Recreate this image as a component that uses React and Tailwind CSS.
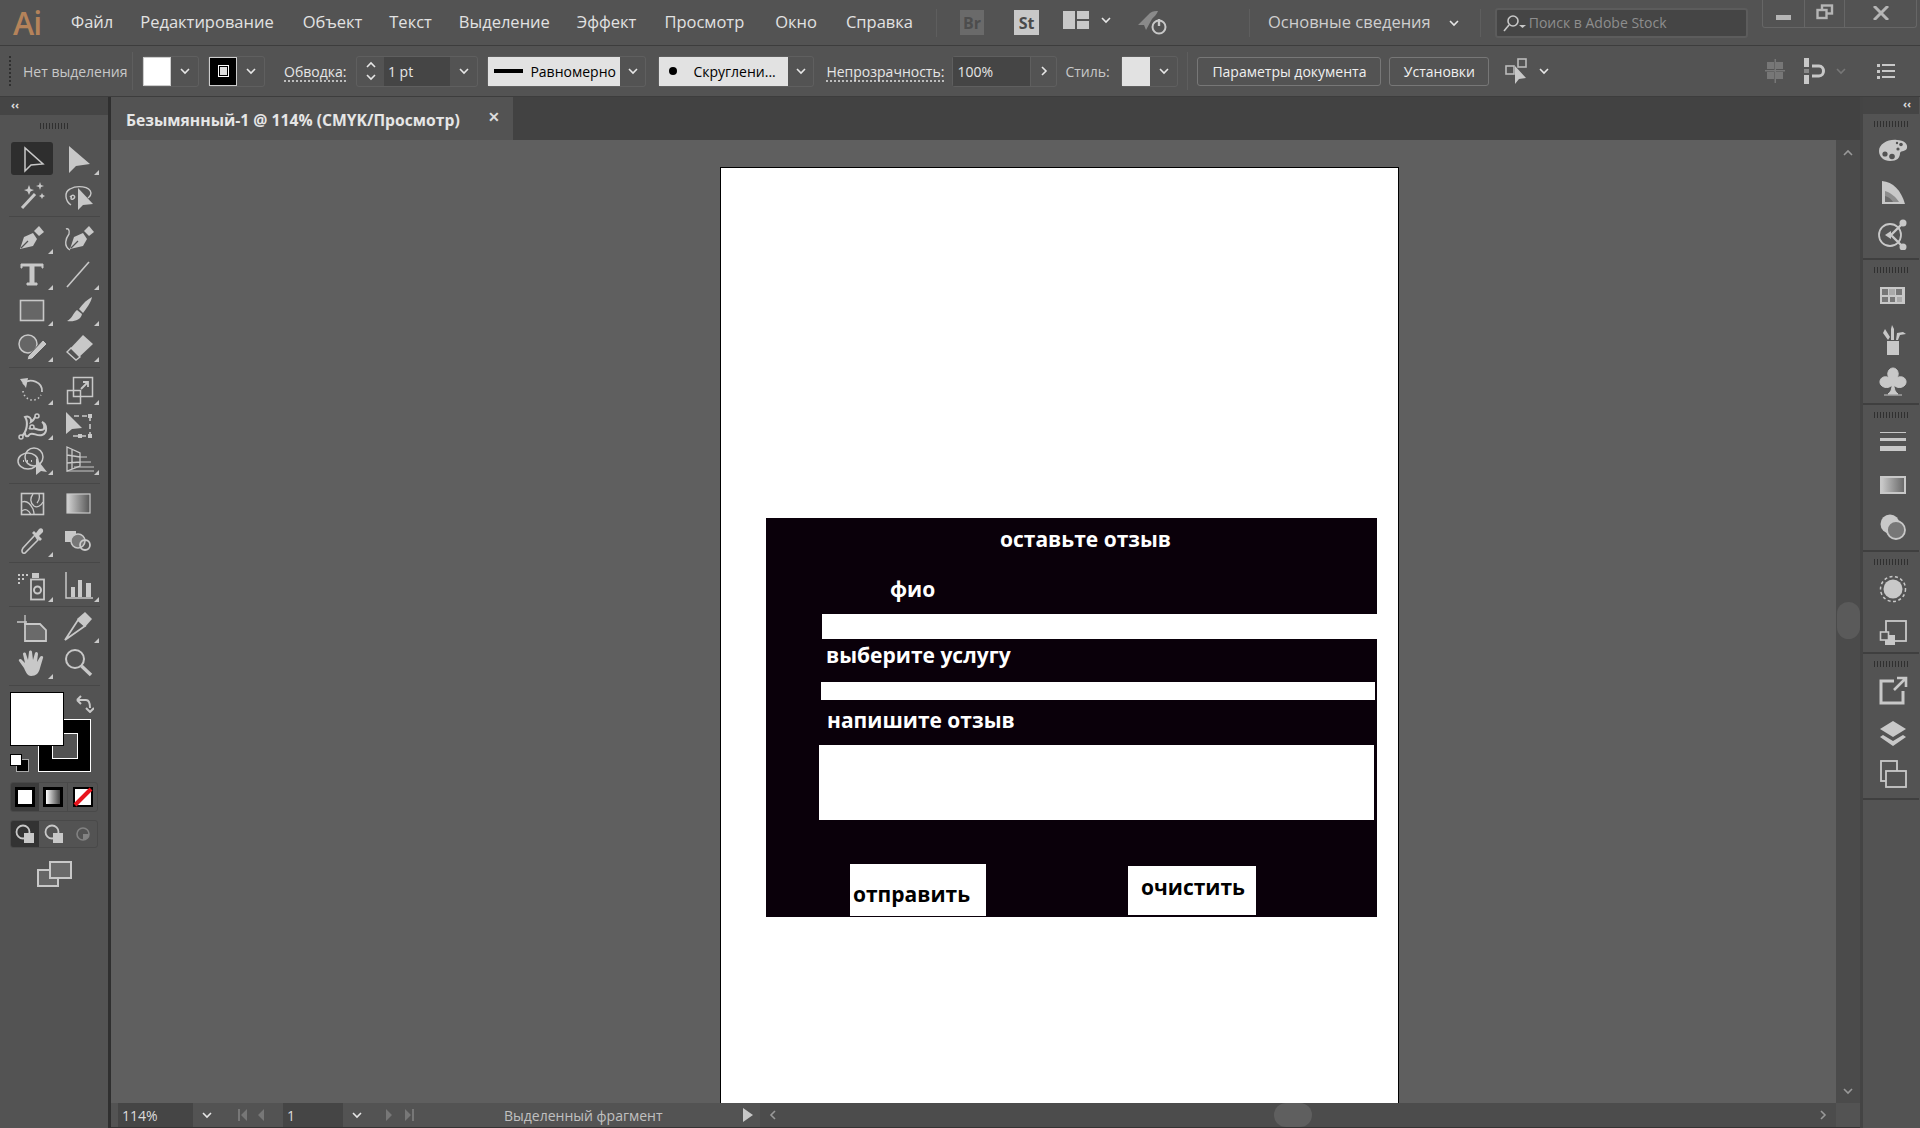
import React from 'react';

const ICON = '#c8c8c8';
const BG = '#535353';

function Chevron({ dir = 'down', color = '#e6e6e6', className = '' }) {
    const points = {
        down: '2,4 6,8 10,4',
        up: '2,8 6,4 10,8',
        right: '4,2 8,6 4,10',
        left: '8,2 4,6 8,10',
    }[dir];
    return (
        <svg width="12" height="12" viewBox="0 0 12 12" className={className}>
            <polyline points={points} fill="none" stroke={color} strokeWidth="1.6" />
        </svg>
    );
}

function Box({ children, size = 32, className = '' }) {
    return (
        <svg width={size} height={size} viewBox={`0 0 ${size} ${size}`} fill="none" stroke={ICON} strokeWidth="1.5" className={className}>
            {children}
        </svg>
    );
}

const nib = (
    <>
        <path d="M4 27 L8 15 L17 11 L21 17 L17 24 Z" fill={ICON} stroke="none" />
        <path d="M18 9 L23 4 L28 10 L23 14 Z" fill={ICON} stroke="none" />
        <path d="M5 26 L12 19" stroke={BG} strokeWidth="1.2" />
    </>
);

const tools = {
    select: <path d="M9 5 V28 L15 22 L27 21 Z" />,
    direct: <path d="M7 3 V30 L14 23 L28 21 Z" fill={ICON} stroke="none" />,
    wand: (
        <>
            <path d="M6 28 L19 14" strokeWidth="3" />
            <path d="M13 5 L14.5 9 L18 10 L14.5 11.5 L13 15 L11.5 11.5 L8 10 L11.5 9 Z M24 2 L25 5 L28 6 L25 7 L24 10 L23 7 L20 6 L23 5 Z M26 13 L27 15 L29 16 L27 17 L26 19 L25 17 L23 16 L25 15 Z" fill={ICON} stroke="none" />
        </>
    ),
    lasso: (
        <>
            <path d="M9 25 C3 21 2 12 8 9 C15 5 28 6 29 13 C29 16 27 17 26 18" strokeWidth="1.4" />
            <path d="M8 17 C11 13 15 17 11 19 C8 20 9 17 10 17" strokeWidth="1.4" />
            <path d="M16 8 V30 L21 25 L31 24 Z" fill={ICON} stroke="none" />
        </>
    ),
    pen: nib,
    curvature: (
        <>
            <g transform="translate(4 0)">{nib}</g>
            <path d="M8 28 C1 24 4 16 7 12 C8 8 6 6 4 7" strokeWidth="1.4" />
        </>
    ),
    type: <path d="M5 6 H27 V10 H26 V8 H18 V25 H21 V27 H11 V25 H14 V8 H6 V10 H5 Z" fill={ICON} stroke={ICON} strokeWidth="1" />,
    line: <path d="M5 29 L27 4" strokeWidth="1.6" />,
    rect: <rect x="4.5" y="6.5" width="23" height="20" fill="#666" strokeWidth="1.6" />,
    brush: (
        <>
            <path d="M17 15 C21 9 26 5 30 3 C29 8 25 14 21 19 Z" fill={ICON} stroke="none" />
            <path d="M15 16 L20 20 C19 26 12 28 5 27 C10 25 11 19 15 16 Z" fill={ICON} stroke="none" />
        </>
    ),
    shaper: (
        <>
            <circle cx="12" cy="14" r="9" fill="#666" />
            <path d="M12 26 L27 10 L31 14 L16 29 L11 30 Z" fill={ICON} stroke={BG} strokeWidth="1" />
        </>
    ),
    eraser: (
        <>
            <path d="M5 22 L21 5 L31 14 L14 30 Z" fill={ICON} stroke="none" />
            <path d="M9 18 L18 27 M5 22 L9 18 L18 27 L14 30 Z" fill={BG} stroke={ICON} strokeWidth="1.4" />
        </>
    ),
    rotate: (
        <>
            <path d="M7 10 C14 3 27 8 26 18" strokeWidth="1.8" />
            <path d="M4 5 L12 4 L10 14 Z" fill={ICON} stroke="none" />
            <path d="M7 17 C8 26 20 30 25 21" strokeDasharray="1.5 2.5" strokeWidth="1.6" />
        </>
    ),
    scale: (
        <>
            <rect x="5.5" y="16.5" width="13" height="13" />
            <rect x="11.5" y="3.5" width="19" height="19" />
            <path d="M19 15 L26 8 M21 8 H26 V13" strokeWidth="1.8" />
        </>
    ),
    warp: (
        <>
            <path d="M5 28 C12 22 12 12 9 8 C13 6 16 10 15 13 C20 10 18 6 22 6 M13 20 C17 16 23 24 28 20 C29 15 26 13 26 13 C31 15 32 24 26 26 C21 28 16 22 13 26 C12 28 9 28 9 24" strokeWidth="2" />
            <circle cx="16" cy="18" r="2" fill={BG} />
            <circle cx="5" cy="28" r="2" fill={BG} />
            <circle cx="21" cy="7" r="2" fill={BG} />
        </>
    ),
    free: (
        <>
            <path d="M4 3 V25 L10 20 L20 19 Z" fill={ICON} stroke="none" />
            <path d="M12 7 H28 V27 H10" strokeDasharray="5 3" strokeWidth="1.6" />
            <path d="M26 5 h4 v4 h-4 Z M26 25 h4 v4 h-4 Z M16 25 h4 v4 h-4 Z" fill={ICON} stroke="none" />
        </>
    ),
    shape: (
        <>
            <ellipse cx="12" cy="17" rx="10" ry="8" />
            <circle cx="18" cy="13" r="9" />
            <path d="M7 17 h1 M11 17 h1 M15 17 h1" strokeWidth="2" />
            <path d="M20 14 V31 L25 27 L31 28 Z" fill={ICON} stroke="none" />
        </>
    ),
    perspective: (
        <>
            <path d="M5 3 L18 9 V22 L5 27 Z M5 11 L18 13 M5 19 L18 18 M10 5 V25" strokeWidth="1.3" />
            <path d="M18 13 H25 M18 18 H29 M12 23 H32 M5 27 H33" strokeWidth="1.1" />
        </>
    ),
    mesh: (
        <>
            <rect x="5.5" y="5.5" width="22" height="21" strokeWidth="1.6" />
            <path d="M6 14 C11 12 14 15 17 21 C18 24 18 25 18 26 M17 6 C14 10 14 15 18 18 C21 20 25 18 27 14 M6 23 C9 20 13 22 15 27 M23 6 C24 10 23 13 21 15" strokeWidth="1.3" />
        </>
    ),
    gradient: (
        <svg width="32" height="32" viewBox="0 0 32 32" x="0" y="0">
            <defs>
                <linearGradient id="toolGrad">
                    <stop offset="0" stopColor="#d4d4d4" />
                    <stop offset="1" stopColor="#555" />
                </linearGradient>
            </defs>
            <rect x="5" y="6" width="23" height="19" fill="url(#toolGrad)" stroke={ICON} strokeWidth="1.2" />
        </svg>
    ),
    eyedropper: (
        <>
            <path d="M19 10 L7 23 C5 26 6 29 9 28 L22 15 Z" stroke={ICON} strokeWidth="1.6" />
            <path d="M16 8 L24 16 L26 14 L23 11 L27 7 C28 4 25 2 23 4 L20 8 L18 6 Z" fill={ICON} stroke="none" />
        </>
    ),
    blend: (
        <>
            <rect x="3" y="6" width="11" height="11" fill={ICON} stroke="none" />
            <circle cx="16" cy="16" r="7" fill="#777" />
            <circle cx="23" cy="20" r="5" strokeWidth="1.8" />
        </>
    ),
    spray: (
        <>
            <rect x="15" y="9.5" width="13" height="20" strokeWidth="1.8" />
            <circle cx="21.5" cy="20" r="3.5" strokeWidth="2" />
            <path d="M16 3 h7 v5 h-7 Z" fill={ICON} stroke="none" />
            <path d="M2 4 h2 v2 h-2 Z M6 4 h2 v2 h-2 Z M10 4 h2 v2 h-2 Z M2 8 h2 v2 h-2 Z M6 8 h2 v2 h-2 Z M2 12 h2 v2 h-2 Z" fill={ICON} stroke="none" />
        </>
    ),
    chart: (
        <>
            <path d="M4 2 V28 H31" strokeWidth="1.5" />
            <path d="M9 17 h4 v10 h-4 Z M16 10 h4 v17 h-4 Z M24 13 h5 v14 h-5 Z" fill={ICON} stroke="none" />
        </>
    ),
    artboard: (
        <>
            <path d="M9 13 H24 L30 19 V30 H9 Z" fill="#6a6a6a" strokeWidth="1.8" />
            <path d="M1 11 H11 M9 4 V14" strokeWidth="1.3" />
        </>
    ),
    slice: (
        <>
            <path d="M3 29 L16 9 L23 15 Z" strokeWidth="1.8" />
            <path d="M15 8 L23 1 L30 8 L23 16 Z" fill={ICON} stroke="none" />
        </>
    ),
    hand: (
        <path d="M8 21 L3 14 C2 12 5 11 6 13 L9 16 L7 7 C7 5 10 5 10 7 L12 13 L13 5 C13 3 16 3 16 5 L17 13 L19 6 C20 4 22 5 22 7 L21 15 L24 10 C25 8 28 9 27 11 L24 21 C23 26 20 29 15 29 C12 29 10 26 8 21 Z" fill={ICON} stroke="none" />
    ),
    zoom: (
        <>
            <circle cx="13" cy="12" r="9" strokeWidth="2" />
            <path d="M19.5 19 L29 28" strokeWidth="3.4" />
        </>
    ),
};

const toolGroups = [
    { rows: 'auto-rows-[37px]', after: 'mt-[2px] mb-[3px]', items: [['select', 0], ['direct', 1], ['wand', 0], ['lasso', 0]] },
    { rows: 'auto-rows-[36px]', after: 'mt-[3px] mb-[4px]', items: [['pen', 1], ['curvature', 0], ['type', 1], ['line', 1], ['rect', 1], ['brush', 1], ['shaper', 1], ['eraser', 1]] },
    { rows: 'auto-rows-[35px]', after: 'mt-[6px] mb-[1px]', items: [['rotate', 1], ['scale', 1], ['warp', 1], ['free', 0], ['shape', 1], ['perspective', 1]] },
    { rows: 'auto-rows-[37px]', after: 'mt-[3px] mb-[4px]', items: [['mesh', 0], ['gradient', 0], ['eyedropper', 1], ['blend', 0]] },
    { rows: 'auto-rows-[37px]', after: 'mt-[2px] mb-[2px]', items: [['spray', 1], ['chart', 1]] },
    { rows: 'auto-rows-[36px]', after: 'mt-[4px] mb-[6px]', items: [['artboard', 0], ['slice', 1], ['hand', 1], ['zoom', 0]] },
];

function Tool({ name, more }) {
    return (
        <div className="relative flex items-center justify-center">
            {name === 'select' && <span className="absolute top-[2px] left-[2px] h-[33px] w-[42px] rounded-[3px] bg-[#2e2e2e]" />}
            {name === 'gradient' ? tools.gradient : <Box className="relative">{tools[name]}</Box>}
            {more === 1 && <span className="absolute right-[2px] bottom-[2px] h-0 w-0 border-b-[5px] border-l-[5px] border-b-[#c8c8c8] border-l-transparent" />}
        </div>
    );
}

function Grip({ count = 11, className = '' }) {
    return (
        <div className={`flex justify-center gap-[2px] ${className}`}>
            {Array.from({ length: count }).map((_, i) => (
                <span key={i} className="h-[6px] w-px bg-[#2f2f2f]" />
            ))}
        </div>
    );
}

function LeftPanel() {
    return (
        <aside className="flex h-full w-[111px] shrink-0 border-r-[3px] border-[#2f2f2f] bg-[#535353]">
            <div className="w-[108px]">
                <div className="flex h-[18px] items-center bg-[#454545] pl-[11px]">
                    <span className="-translate-y-[2px] text-[11px] leading-none font-bold text-[#ddd]">‹‹</span>
                </div>
                <Grip count={10} className="mt-[8px] mb-[11px]" />
                <div className="pl-[9px]">
                    {toolGroups.map((group, i) => (
                        <div key={i}>
                            <div className={`grid w-[92px] grid-cols-2 ${group.rows}`}>
                                {group.items.map(([name, more]) => (
                                    <Tool key={name} name={name} more={more} />
                                ))}
                            </div>
                            <div className={`h-px w-[91px] bg-[#474747] ${group.after}`} />
                        </div>
                    ))}
                </div>
                <SwatchArea />
            </div>
        </aside>
    );
}

function SwatchArea() {
    return (
        <div className="relative h-[200px]">
            <div className="absolute top-[27px] left-[38px] h-[53px] w-[53px] border border-white bg-black">
                <div className="absolute top-[13px] left-[13px] h-[26px] w-[26px] border border-white bg-[#535353]" />
            </div>
            <div className="absolute top-0 left-[10px] h-[54px] w-[54px] border border-black bg-white" />
            <svg width="18" height="18" viewBox="0 0 18 18" className="absolute top-[3px] left-[76px]" fill="none" stroke={ICON} strokeWidth="2">
                <path d="M2 5 H10 C13 5 14 8 14 13" />
                <path d="M1 5 L5 1 M1 5 L5 9 M10 13 L14 17 L18 13" />
            </svg>
            <div className="absolute top-[62px] left-[10px] h-[17px] w-[19px]">
                <div className="absolute top-[5px] left-[6px] h-[13px] w-[13px] border border-[#aaa] bg-black" />
                <div className="absolute top-0 left-0 h-[12px] w-[12px] border border-black bg-white" />
            </div>
            <div className="absolute top-[90px] left-[10px] flex h-[30px] w-[88px] overflow-hidden rounded-[3px] border border-[#494949]">
                <div className="flex w-[28px] items-center justify-center bg-[#3c3c3c]">
                    <span className="h-[20px] w-[20px] border-[3px] border-black bg-white" />
                </div>
                <div className="flex flex-1 items-center justify-center border-r border-[#494949]">
                    <span className="h-[20px] w-[20px] border-[3px] border-black bg-gradient-to-r from-white to-[#444]" />
                </div>
                <div className="flex w-[29px] items-center justify-center">
                    <svg width="20" height="20" viewBox="0 0 20 20">
                        <rect x="0" y="0" width="20" height="20" fill="black" />
                        <rect x="2" y="2" width="16" height="16" fill="white" />
                        <path d="M2 18 L18 2" stroke="#e8141c" strokeWidth="4" />
                    </svg>
                </div>
            </div>
            <div className="absolute top-[128px] left-[10px] flex h-[28px] w-[88px] overflow-hidden rounded-[3px] border border-[#494949]">
                <div className="flex w-[28px] items-center justify-center bg-[#333]">
                    <ModeIcon />
                </div>
                <div className="flex flex-1 items-center justify-center">
                    <ModeIcon />
                </div>
                <div className="flex w-[29px] items-center justify-center opacity-40">
                    <svg width="16" height="16" viewBox="0 0 16 16">
                        <circle cx="8" cy="8" r="6" fill="none" stroke={ICON} strokeWidth="1.6" />
                        <path d="M8 8 H14 A6 6 0 0 1 8 14 Z" fill={ICON} />
                    </svg>
                </div>
            </div>
            <svg width="36" height="26" viewBox="0 0 36 26" className="absolute top-[169px] left-[37px]" fill="none" stroke={ICON} strokeWidth="2">
                <rect x="1" y="9" width="20" height="16" fill="#666" />
                <rect x="13" y="1" width="21" height="16" fill="#6a6a6a" />
            </svg>
        </div>
    );
}

function ModeIcon() {
    return (
        <svg width="20" height="20" viewBox="0 0 20 20" fill="none" stroke={ICON} strokeWidth="1.8">
            <circle cx="8" cy="8" r="6.5" />
            <rect x="9" y="9" width="10" height="10" fill={ICON} stroke="none" />
        </svg>
    );
}

const panelIcons = [
    [
        <g key="p" stroke="none">
            <path d="M2 17 C2 10 11 5 20 6 C27 6 31 10 30 14 C29 18 24 16 23 19 C23 24 20 27 13 27 C7 27 2 23 2 17 Z" fill={ICON} />
            <circle cx="8" cy="20" r="2.6" fill={BG} />
            <circle cx="15" cy="22.5" r="2.8" fill={BG} />
            <circle cx="24" cy="10.5" r="1.8" fill={BG} />
            <circle cx="20" cy="9" r="1.2" fill={BG} />
            <circle cx="21" cy="15" r="1.6" fill={BG} />
        </g>,
        <g key="w" stroke="none">
            <path d="M5 5 C16 6 24 14 28 28 H5 Z" fill={ICON} />
            <path d="M8 26 V15 C14 17 19 21 22 26 Z" fill="#8d8d8d" />
            <path d="M8 26 V20 C12 21 14 23 16 26 Z" fill="#6b6b6b" />
        </g>,
        <g key="g">
            <circle cx="13" cy="17" r="11" strokeWidth="1.8" />
            <path d="M14 17 L25 6 M14 17 L25 28" strokeWidth="2.4" />
            <path d="M8 17 L14 13 V21 Z" fill={ICON} stroke="none" />
            <circle cx="26" cy="5" r="3.5" fill={ICON} stroke="none" />
            <circle cx="26" cy="29" r="3.5" fill={ICON} stroke="none" />
        </g>,
    ],
    [
        <g key="s" stroke="none">
            <rect x="3" y="6" width="25" height="17" fill={ICON} />
            <path d="M5 8 h6 v6 h-6 Z M19 8 h6 v6 h-6 Z M5 16 h6 v5 h-6 Z M13 16 h5 v5 h-5 Z" fill="#777" />
            <path d="M12 8 h6 v6 h-6 Z M20 16 h5 v5 h-5 Z" fill="#aaa" />
        </g>,
        <g key="b" stroke="none" fill={ICON}>
            <rect x="10" y="17" width="12" height="14" />
            <path d="M11 16 L6 9 L8 5 L13 13 Z M14 16 V5 L15 1 L17 5 V16 Z M19 16 L20 9 L26 8 L29 10 L23 11 L21 16 Z" />
        </g>,
        <path key="c" d="M15 18 C11 23 2 20 3 14 C4 9 10 9 12 11 C9 6 12 1 16 1 C20 1 23 6 20 11 C22 9 28 9 29 14 C30 20 21 23 17 18 C17 22 18 25 21 27 H11 C14 25 15 22 15 18 Z M7 28 H25" fill={ICON} stroke={ICON} strokeWidth="1" />,
    ],
];

function Strokes() {
    return (
        <div className="flex w-[26px] flex-col gap-[5px]">
            <span className="h-px bg-[#c8c8c8]" />
            <span className="h-[3px] bg-[#c8c8c8]" />
            <span className="h-[5px] bg-[#c8c8c8]" />
        </div>
    );
}

function RightIcon({ children, className = '' }) {
    return <div className={`flex items-center justify-center pl-[4px] ${className}`}><Box>{children}</Box></div>;
}

function RightPanel() {
    return (
        <aside className="flex h-full w-[60px] shrink-0 border-l-[3px] border-[#444] bg-[#535353] pr-px">
            <div className="flex-1">
                <div className="flex h-[17px] items-center justify-end bg-[#454545] pr-[8px]">
                    <span className="-translate-y-[2px] text-[11px] leading-none font-bold text-[#ddd]">‹‹</span>
                </div>
                <Section h="h-[146px]">
                    {panelIcons[0].map((icon, i) => <RightIcon key={i} className="h-[42px]">{icon}</RightIcon>)}
                </Section>
                <Section h="h-[145px]">
                    {panelIcons[1].map((icon, i) => <RightIcon key={i} className="h-[43px]">{icon}</RightIcon>)}
                </Section>
                <Section h="h-[147px]">
                    <div className="flex h-[43px] items-center justify-center pl-[4px]"><Strokes /></div>
                    <div className="flex h-[43px] items-center justify-center pl-[4px]">
                        <span className="h-[18px] w-[26px] border-2 border-[#c8c8c8] bg-gradient-to-r from-[#c8c8c8] to-[#6a6a6a]" />
                    </div>
                    <RightIcon className="h-[42px]">
                        <circle cx="13" cy="13" r="9.5" fill={ICON} stroke="none" />
                        <circle cx="19" cy="19" r="9" fill="#777" strokeWidth="1.8" />
                    </RightIcon>
                </Section>
                <Section h="h-[102px]">
                    <RightIcon className="h-[44px]">
                        <circle cx="16" cy="16" r="9.5" fill={ICON} stroke="none" />
                        <circle cx="16" cy="16" r="12.5" strokeDasharray="3 2.5" strokeWidth="1.5" />
                    </RightIcon>
                    <RightIcon className="h-[44px]">
                        <rect x="9" y="4" width="20" height="20" strokeWidth="1.8" />
                        <rect x="8" y="18" width="10" height="10" fill={ICON} stroke="none" />
                        <rect x="3.5" y="15" width="8" height="8" fill={BG} strokeWidth="1.6" />
                    </RightIcon>
                </Section>
                <Section h="h-[146px]">
                    <RightIcon className="h-[43px]">
                        <path d="M17 6 H4 V28 H26 V16" strokeWidth="3" />
                        <path d="M17 15 L28 4 M20 3 H29 V12" strokeWidth="2.6" />
                    </RightIcon>
                    <RightIcon className="h-[41px]">
                        <path d="M16 4 L29 12 L16 20 L3 12 Z" fill={ICON} stroke="none" />
                        <path d="M6 18 L16 24 L26 18 L29 20 L16 29 L3 20 Z" fill={ICON} stroke="none" />
                    </RightIcon>
                    <RightIcon className="h-[42px]">
                        <rect x="4" y="3" width="16" height="20" strokeWidth="1.8" />
                        <rect x="9" y="13" width="20" height="16" fill={BG} strokeWidth="1.8" />
                    </RightIcon>
                </Section>
            </div>
        </aside>
    );
}

function Section({ h, children }) {
    return (
        <div className={`${h} border-b-2 border-[#3f3f3f] pt-[7px]`}>
            <Grip count={12} />
            <div className="mt-[2px]">{children}</div>
        </div>
    );
}

const menu = [
    ['Файл', 'ml-[30px]'],
    ['Редактирование', 'ml-[27px]'],
    ['Объект', 'ml-[29px]'],
    ['Текст', 'ml-[27px]'],
    ['Выделение', 'ml-[27px]'],
    ['Эффект', 'ml-[27px]'],
    ['Просмотр', 'ml-[28px]'],
    ['Окно', 'ml-[31px]'],
    ['Справка', 'ml-[29px]'],
];

function MenuBar() {
    return (
        <header className="relative flex h-[46px] shrink-0 items-center border-b border-[#3d3d3d] bg-[#535353] text-[16.5px] text-[#e2e2e2]">
            <span className="ml-[13px] w-[28px] text-[32px] leading-none font-semibold tracking-[-1px] text-[#b5835a]">Ai</span>
            {menu.map(([label, ml]) => (
                <span key={label} className={`${ml} whitespace-nowrap`}>{label}</span>
            ))}
            <span className="ml-[23px] h-[28px] w-px bg-[#5e5e5e]" />
            <span className="ml-[23px] flex h-[25px] w-[24px] items-center justify-center bg-[#6a6a6a] text-[16px] font-bold text-[#4d4d4d]">Br</span>
            <span className="ml-[30px] flex h-[25px] w-[25px] items-center justify-center bg-[#c8c8c8] text-[16px] font-bold text-[#4a4a4a]">St</span>
            <svg width="26" height="18" viewBox="0 0 26 18" className="ml-[24px] -translate-y-[3px]" fill="#c8c8c8">
                <rect x="0" y="0" width="12" height="18" />
                <rect x="14" y="0" width="12" height="8" />
                <rect x="14" y="10" width="12" height="8" />
            </svg>
            <Chevron className="ml-[11px] -translate-y-[3px]" />
            <svg width="34" height="26" viewBox="0 0 34 26" className="ml-[24px]" fill="none" stroke="#aaa">
                <path d="M2 15 L14 3 C17 1 20 1 22 1 C21 4 18 7 16 9 L10 20 L8 15 Z" fill="#8a8a8a" stroke="none" />
                <circle cx="23" cy="17" r="6.5" strokeWidth="2" stroke="#c8c8c8" />
                <path d="M23 9 V16" strokeWidth="2.4" stroke="#c8c8c8" />
            </svg>
            <span className="ml-[79px] h-[28px] w-px bg-[#5e5e5e]" />
            <span className="ml-[18px] whitespace-nowrap text-[#cfcfcf]">Основные сведения</span>
            <Chevron className="ml-[17px]" />
            <span className="ml-[20px] h-[28px] w-px bg-[#5e5e5e]" />
            <div className="ml-[14px] flex h-[30px] w-[253px] items-center rounded-[3px] border-2 border-[#5c5c5c] bg-[#454545] pl-[6px] text-[14px] text-[#8e8e8e]">
                <svg width="24" height="18" viewBox="0 0 24 18" fill="none" stroke="#c8c8c8" strokeWidth="1.6">
                    <circle cx="10" cy="7" r="5" />
                    <path d="M6 11 L1 17" />
                    <path d="M16 11 h7 l-3.5 3 Z" fill="#c8c8c8" stroke="none" />
                </svg>
                <span className="ml-[2px] whitespace-nowrap">Поиск в Adobe Stock</span>
            </div>
            <div className="absolute top-0 right-[3px] flex h-[28px] w-[155px] rounded-b-[3px] border border-t-0 border-[#666]">
                <div className="flex w-[42px] items-center justify-center border-r border-[#666]">
                    <span className="mt-[8px] h-[5px] w-[15px] bg-[#b5b5b5]" />
                </div>
                <div className="flex w-[40px] items-center justify-center border-r border-[#666]">
                    <svg width="18" height="16" viewBox="0 0 18 16" fill="none" stroke="#b5b5b5" strokeWidth="2.4" className="-translate-y-[2px]">
                        <rect x="6" y="1.5" width="10" height="8" />
                        <rect x="1.5" y="6" width="9" height="8" fill="#535353" />
                    </svg>
                </div>
                <div className="flex flex-1 items-center justify-center">
                    <svg width="16" height="14" viewBox="0 0 16 14" stroke="#b5b5b5" strokeWidth="3" className="-translate-y-[1px]">
                        <path d="M1 0 L15 14 M15 0 L1 14" />
                    </svg>
                </div>
            </div>
        </header>
    );
}

function Drop({ w = 'w-[28px]', dir = 'down', className = '' }) {
    return (
        <div className={`flex h-full items-center justify-center ${w} ${className}`}>
            <Chevron dir={dir} />
        </div>
    );
}

function Label({ children, className = '' }) {
    return <span className={`translate-y-[2px] whitespace-nowrap border-b-2 border-dotted border-[#bdbdbd] leading-[16px] text-[#e6e6e6] ${className}`}>{children}</span>;
}

function ControlBar() {
    return (
        <div className="flex h-[51px] shrink-0 items-center border-b border-[#3d3d3d] bg-[#535353] text-[14px] text-[#e6e6e6]">
            <span className="ml-[9px] h-[30px] w-px border-l-2 border-dotted border-[#2f2f2f]" />
            <span className="ml-[12px] w-[105px] whitespace-nowrap text-[#c8c8c8]">Нет выделения</span>
            <span className="ml-[4px] h-[38px] w-px bg-[#5e5e5e]" />
            <div className="ml-[9px] flex h-[31px] w-[57px] rounded-[3px] border border-[#5f5f5f]">
                <span className="h-full w-[29px] border border-[#ccc] bg-white" />
                <Drop />
            </div>
            <div className="ml-[9px] flex h-[31px] w-[57px] rounded-[3px] border border-[#5f5f5f]">
                <span className="flex h-full w-[29px] items-center justify-center border border-[#ccc] bg-black">
                    <span className="flex h-[12px] w-[11px] items-center justify-center border border-white">
                        <span className="h-[8px] w-[7px] bg-[#ddd]" />
                    </span>
                </span>
                <Drop />
            </div>
            <Label className="ml-[19px]">Обводка:</Label>
            <div className="ml-[10px] flex h-[31px] w-[122px] rounded-[3px] border border-[#5f5f5f]">
                <div className="flex w-[27px] flex-col items-center justify-center">
                    <Chevron dir="up" />
                    <Chevron />
                </div>
                <span className="flex h-full w-[67px] items-center bg-[#454545] pl-[4px]">1 pt</span>
                <Drop />
            </div>
            <div className="ml-[9px] flex h-[31px] w-[159px] rounded-[3px] border border-[#5f5f5f]">
                <span className="flex h-full w-[132px] items-center bg-[#e2e2e2] pl-[6px] text-black">
                    <span className="h-[4px] w-[29px] bg-black" />
                    <span className="ml-[7px]">Равномерно</span>
                </span>
                <Drop w="flex-1" />
            </div>
            <div className="ml-[12px] flex h-[31px] w-[156px] rounded-[3px] border border-[#5f5f5f]">
                <span className="flex h-full w-[129px] items-center bg-[#e2e2e2] pl-[10px] text-black">
                    <span className="h-[8px] w-[8px] rounded-full bg-black" />
                    <span className="ml-[16px] whitespace-nowrap">Скруглени...</span>
                </span>
                <Drop w="flex-1" />
            </div>
            <Label className="ml-[12px]">Непрозрачность:</Label>
            <div className="ml-[8px] flex h-[31px] w-[105px] rounded-[3px] border border-[#5f5f5f]">
                <span className="flex h-full w-[77px] items-center bg-[#454545] pl-[4px]">100%</span>
                <Drop dir="right" w="flex-1" className="border-l border-[#5f5f5f]" />
            </div>
            <span className="ml-[8px] w-[48px] text-[#c8c8c8]">Стиль:</span>
            <div className="ml-[8px] flex h-[31px] w-[57px] rounded-[3px] border border-[#5f5f5f]">
                <span className="h-full w-[29px] bg-[#e2e2e2]" />
                <Drop />
            </div>
            <span className="ml-[9px] h-[38px] w-px bg-[#5e5e5e]" />
            <button className="ml-[9px] h-[29px] w-[184px] rounded-[3px] border border-[#777] whitespace-nowrap text-[#f0f0f0]">Параметры документа</button>
            <button className="ml-[8px] h-[29px] w-[100px] rounded-[3px] border border-[#777] whitespace-nowrap text-[#f0f0f0]">Установки</button>
            <svg width="28" height="28" viewBox="0 0 28 28" className="ml-[15px]" fill="none" stroke="#bbb" strokeWidth="1.6">
                <rect x="2" y="9" width="8" height="8" />
                <rect x="14" y="2" width="8" height="8" />
                <path d="M11 9 V27 L15 22 L22 21 Z" fill="#c8c8c8" stroke="none" />
            </svg>
            <Chevron className="ml-[6px]" />
            <div className="ml-auto flex items-center pr-[25px]">
                <svg width="20" height="24" viewBox="0 0 20 24" fill="#777">
                    <rect x="2" y="3" width="7" height="7" />
                    <rect x="11" y="3" width="7" height="7" />
                    <rect x="2" y="13" width="7" height="7" />
                    <rect x="11" y="13" width="7" height="7" />
                    <path d="M0 11 H20 V12.5 H0 Z M9.5 0 H11 V24 H9.5 Z" />
                </svg>
                <svg width="28" height="26" viewBox="0 0 28 26" className="ml-[19px]">
                    <rect x="0" y="0" width="5" height="9" fill="#c8c8c8" />
                    <rect x="0" y="11" width="5" height="4" fill="#888" />
                    <rect x="0" y="17" width="5" height="9" fill="#c8c8c8" />
                    <path d="M8 8 H15 C21 8 21 18 15 18 H8" fill="none" stroke="#c8c8c8" strokeWidth="3" />
                </svg>
                <Chevron color="#777" className="ml-[3px]" />
                <svg width="18" height="16" viewBox="0 0 18 16" className="ml-[30px]" fill="#c8c8c8">
                    <rect x="0" y="1" width="3" height="3" />
                    <rect x="5" y="1" width="13" height="2" />
                    <rect x="0" y="7" width="3" height="3" />
                    <rect x="5" y="7" width="13" height="2" />
                    <rect x="0" y="13" width="3" height="3" />
                    <rect x="5" y="13" width="13" height="2" />
                </svg>
            </div>
        </div>
    );
}

function Artboard() {
    // positions on the artboard are the drawing itself
    const heading = "absolute whitespace-nowrap text-[21px] leading-[28px] font-bold";
    return (
        <div className="absolute top-[27px] left-[609px] h-[1000px] w-[679px] border border-black bg-white">
            <div className="absolute top-[350px] left-[45px] h-[399px] w-[611px] bg-[#0a000a]" />
            <div className="absolute top-[446px] left-[101px] h-[25px] w-[555px] bg-white" />
            <div className="absolute top-[514px] left-[100px] h-[18px] w-[554px] bg-white" />
            <div className="absolute top-[577px] left-[98px] h-[75px] w-[555px] bg-white" />
            <div className="absolute top-[696px] left-[129px] h-[52px] w-[136px] bg-white" />
            <div className="absolute top-[698px] left-[407px] h-[49px] w-[128px] bg-white" />
            <span className={`${heading} top-[357px] left-[279px] text-white`}>оставьте отзыв</span>
            <span className={`${heading} top-[407px] left-[169px] text-white`}>фио</span>
            <span className={`${heading} top-[473px] left-[105px] text-white`}>выберите услугу</span>
            <span className={`${heading} top-[538px] left-[106px] text-white`}>напишите отзыв</span>
            <span className={`${heading} top-[712px] left-[132px] text-black`}>отправить</span>
            <span className={`${heading} top-[705px] left-[420px] text-black`}>очистить</span>
        </div>
    );
}

function StatusBar() {
    return (
        <div className="flex h-[25px] shrink-0 items-stretch border-b border-[#333] bg-[#4c4c4c] text-[14px] text-[#dcdcdc]">
            <div className="flex w-[649px] items-stretch bg-[#535353] pl-[7px]">
                <span className="flex w-[75px] items-center bg-[#454545] pl-[4px]">114%</span>
                <Drop w="w-[27px]" />
                <div className="flex w-[63px] items-center justify-center">
                    <svg width="32" height="14" viewBox="0 0 32 14" fill="#777">
                        <rect x="2" y="1" width="2" height="12" />
                        <path d="M5 7 L11 1 V13 Z M22 7 L28 1 V13 Z" />
                    </svg>
                </div>
                <span className="flex w-[60px] items-center bg-[#454545] pl-[4px]">1</span>
                <Drop w="w-[27px]" />
                <div className="flex w-[63px] items-center justify-center">
                    <svg width="36" height="14" viewBox="0 0 36 14" fill="#777">
                        <path d="M2 1 L8 7 L2 13 Z M21 1 L27 7 L21 13 Z" />
                        <rect x="28" y="1" width="2" height="12" />
                    </svg>
                </div>
                <span className="ml-[71px] flex items-center whitespace-nowrap text-[#c0c0c0]">Выделенный фрагмент</span>
                <div className="ml-auto flex items-center pr-[4px]">
                    <svg width="14" height="14" viewBox="0 0 14 14" fill="#c8c8c8">
                        <path d="M1 0 L11 7 L1 14 Z" />
                    </svg>
                </div>
            </div>
            <div className="relative flex flex-1 items-center justify-between pr-[7px] pl-[7px]">
                <Chevron dir="left" color="#999" />
                <span className="absolute top-0 left-[514px] h-full w-[38px] rounded-[14px] bg-[#5f5f5f]" />
                <Chevron dir="right" color="#999" />
            </div>
            <div className="w-[24px] bg-[#535353]" />
        </div>
    );
}

export default function App() {
    return (
        <div className="flex h-[1128px] w-[1920px] flex-col overflow-hidden bg-[#424242] text-[14px] [font-family:'Open_Sans',sans-serif]">
            <MenuBar />
            <ControlBar />
            <div className="flex min-h-0 flex-1">
                <LeftPanel />
                <main className="flex min-w-0 flex-1 flex-col">
                    <div className="flex h-[43px] shrink-0 bg-[#424242]">
                        <div className="flex w-[402px] items-center justify-between bg-[#535353] pr-[13px] pl-[15px]">
                            <span className="translate-y-[2px] whitespace-nowrap text-[15.7px] font-bold text-[#e6e6e6]">Безымянный-1 @ 114% (CMYK/Просмотр)</span>
                            <span className="-translate-y-[2px] text-[14px] font-bold text-[#ddd]">✕</span>
                        </div>
                    </div>
                    <div className="flex min-h-0 flex-1">
                        <div className="relative min-w-0 flex-1 overflow-hidden bg-[#5f5f5f]">
                            <Artboard />
                        </div>
                        <div className="relative w-[24px] shrink-0 bg-[#4b4b4b]">
                            <Chevron dir="up" color="#999" className="absolute top-[7px] left-[6px]" />
                            <span className="absolute top-[462px] left-[1px] h-[37px] w-[23px] rounded-[12px] bg-[#5a5a5a]" />
                            <Chevron dir="down" color="#999" className="absolute bottom-[6px] left-[6px]" />
                        </div>
                    </div>
                    <StatusBar />
                </main>
                <RightPanel />
            </div>
        </div>
    );
}
